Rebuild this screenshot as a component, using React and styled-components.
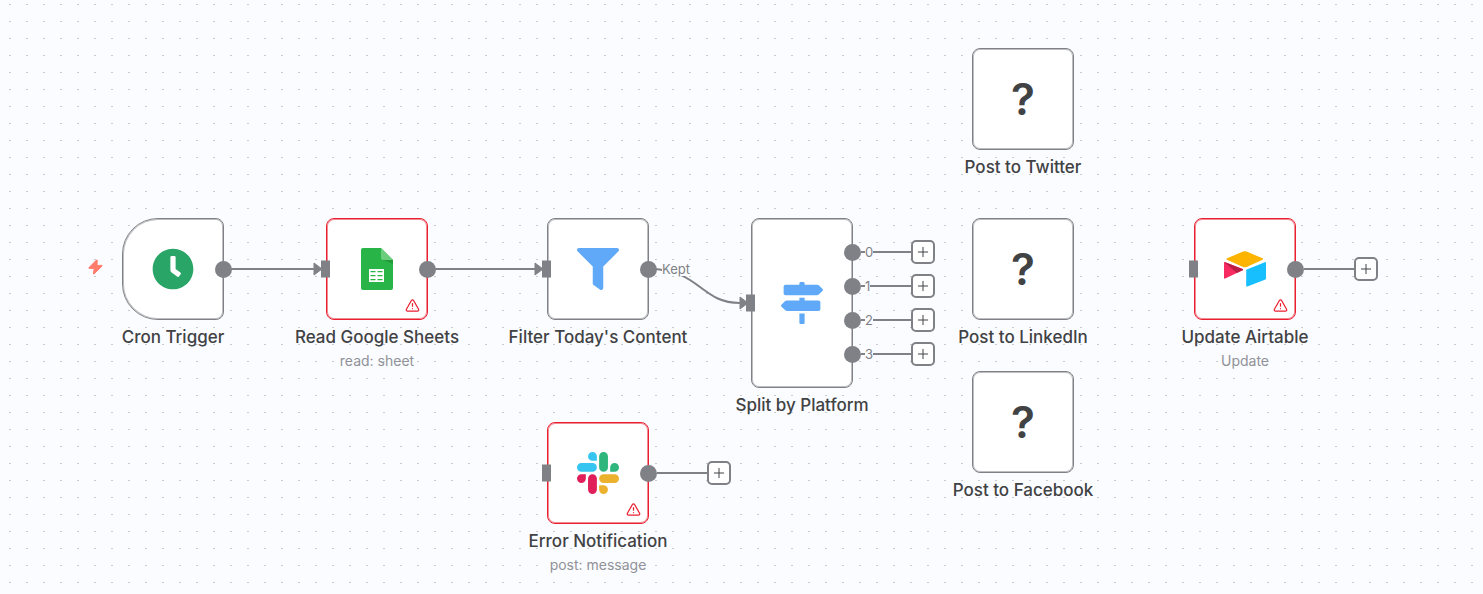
import React from "react";
import styled, { createGlobalStyle } from "styled-components";
import { FaClock, FaFilter, FaMapSigns } from "react-icons/fa";
import { Plus, TriangleAlert } from "lucide-react";

const GRAY = "#7f8186";
const RED = "#ea1f30";
const CANVAS = "#fbfcff";

const GlobalStyle = createGlobalStyle`
  body {
    margin: 0;
    font-family: Inter, "Liberation Sans", sans-serif;
    color: #414244;
    background: ${CANVAS};
  }
`;

const Canvas = styled.main`
  position: relative;
  width: 100%;
  min-height: 100vh;
  overflow: hidden;
  background-color: ${CANVAS};
  background-image: conic-gradient(from 270deg at 2px 1px, transparent 0, #c9cacd 0, #c9cacd 90deg, transparent 0);
  background-size: 17px 17px;
  background-position: 9px 4px;
`;

const Edges = styled.svg`
  position: absolute;
  top: 0;
  left: 0;
  overflow: visible;
  fill: none;
  stroke: ${GRAY};
  stroke-width: 2;
`;

const NodeItem = styled.article`
  position: absolute;
  left: ${(p) => p.$x}px;
  top: ${(p) => p.$y}px;
  width: 102px;
  display: flex;
  flex-direction: column;
  align-items: center;
`;

const Card = styled.div`
  position: relative;
  box-sizing: border-box;
  width: 100%;
  height: ${(p) => (p.$tall ? 170 : 102)}px;
  display: flex;
  align-items: center;
  justify-content: center;
  background: #fff;
  border: 1px solid ${(p) => (p.$error ? RED : GRAY)};
  box-shadow: inset 0 0 0 1px ${(p) => (p.$error ? "#f28a94" : "#bdbec1")};
  border-radius: ${(p) => (p.$trigger ? "36px 8px 8px 36px" : "8px")};

  > svg {
    display: block;
  }
`;

const Title = styled.h2`
  margin: 6px 0 0;
  font-size: 17px;
  line-height: 22px;
  font-weight: 500;
  white-space: nowrap;
`;

const Subtitle = styled.p`
  margin: 4px 0 0;
  font-size: 14px;
  line-height: 18px;
  color: #909298;
  white-space: nowrap;
`;

const Unknown = styled.span`
  font-size: 44px;
  line-height: 44px;
  font-weight: 600;
`;

const Warning = styled(TriangleAlert)`
  position: absolute;
  right: 7px;
  bottom: 6px;
  color: ${RED};
`;

const Bolt = styled.svg`
  position: absolute;
  left: -35px;
  top: 40px;
`;

const InputHandle = styled.span`
  position: absolute;
  left: -6px;
  top: 50%;
  width: 9px;
  height: 17px;
  transform: translateY(-50%);
  background: ${GRAY};
`;

const Outputs = styled.div`
  position: absolute;
  left: 92px;
  top: 50%;
  transform: translateY(-50%);
  display: flex;
  flex-direction: column;
  gap: 10px;
`;

const Output = styled.div`
  display: flex;
  align-items: center;
  height: 24px;
`;

const Dot = styled.span`
  width: 17px;
  height: 17px;
  border-radius: 50%;
  background: ${GRAY};
`;

const Stem = styled.span`
  display: flex;
  align-items: center;
  width: 50px;
  height: 2px;
  padding-left: 4px;
  box-sizing: border-box;
  background: ${GRAY};
`;

const EdgeLabel = styled.span`
  font-size: 13px;
  line-height: 14px;
  color: ${GRAY};
  background: ${CANVAS};
`;

const KeptLabel = styled(EdgeLabel)`
  position: absolute;
  left: 662px;
  top: 262px;
`;

const AddButton = styled.button`
  box-sizing: border-box;
  width: 24px;
  height: 24px;
  padding: 0;
  display: flex;
  align-items: center;
  justify-content: center;
  color: #414244;
  background: #fff;
  border: 2px solid ${GRAY};
  border-radius: 5px;
  cursor: pointer;
`;

function SheetsIcon() {
  return (
    <svg width="32" height="42" viewBox="0 0 32 42" aria-hidden="true">
      <path fill="#28b446" d="M2 0h18l12 12v28a2 2 0 0 1-2 2H2a2 2 0 0 1-2-2V2a2 2 0 0 1 2-2z" />
      <path fill="#219b38" d="M21 11.500 32 16v-4z" />
      <path fill="#6ace7c" d="M20 0l12 12H22a2 2 0 0 1-2-2z" />
      <path
        fill="#fff"
        fillRule="evenodd"
        d="M8 21h15v13H8zM9.500 23v1.200h5V23zm7 0v1.200h5V23zM9.500 27v1.200h5V27zm7 0v1.200h5V27zM9.500 31v1.200h5V31zm7 0v1.200h5V31z"
      />
    </svg>
  );
}

function SlackIcon() {
  return (
    <svg width="42" height="42" viewBox="0 0 24 24" aria-hidden="true">
      <path fill="#e01e5a" d="M5.042 15.165a2.528 2.528 0 0 1-2.520 2.523A2.528 2.528 0 0 1 0 15.165a2.527 2.527 0 0 1 2.522-2.520h2.520v2.520zM6.313 15.165a2.527 2.527 0 0 1 2.521-2.520 2.527 2.527 0 0 1 2.521 2.520v6.313A2.528 2.528 0 0 1 8.834 24a2.528 2.528 0 0 1-2.521-2.522v-6.313z" />
      <path fill="#36c5f0" d="M8.834 5.042a2.528 2.528 0 0 1-2.521-2.520A2.528 2.528 0 0 1 8.834 0a2.528 2.528 0 0 1 2.521 2.522v2.520H8.834zM8.834 6.313a2.528 2.528 0 0 1 2.521 2.521 2.528 2.528 0 0 1-2.521 2.521H2.522A2.528 2.528 0 0 1 0 8.834a2.528 2.528 0 0 1 2.522-2.521h6.312z" />
      <path fill="#2eb67d" d="M18.956 8.834a2.528 2.528 0 0 1 2.522-2.521A2.528 2.528 0 0 1 24 8.834a2.528 2.528 0 0 1-2.522 2.521h-2.522V8.834zM17.688 8.834a2.528 2.528 0 0 1-2.523 2.521 2.527 2.527 0 0 1-2.520-2.521V2.522A2.527 2.527 0 0 1 15.165 0a2.528 2.528 0 0 1 2.523 2.522v6.312z" />
      <path fill="#ecb22e" d="M15.165 18.956a2.528 2.528 0 0 1 2.523 2.522A2.528 2.528 0 0 1 15.165 24a2.527 2.527 0 0 1-2.520-2.522v-2.522h2.520zM15.165 17.688a2.527 2.527 0 0 1-2.520-2.523 2.526 2.526 0 0 1 2.520-2.520h6.313A2.527 2.527 0 0 1 24 15.165a2.528 2.528 0 0 1-2.522 2.523h-6.313z" />
    </svg>
  );
}

function AirtableIcon() {
  return (
    <svg width="42" height="36" viewBox="0 0 42 36" aria-hidden="true">
      <path fill="#fcb400" d="M19 .6a5 5 0 0 1 3.600 0L38.600 7.300a.8.8 0 0 1 0 1.500L22.700 15.900a5 5 0 0 1-3.600 0L3 8.800a.8.8 0 0 1 0-1.500z" />
      <path fill="#18bfff" d="M22.200 19.300a1 1 0 0 1 .6-.9l18-7.200a.9.9 0 0 1 1.200.8v15.500a1 1 0 0 1-.6.9l-18 7.100a.9.9 0 0 1-1.200-.8z" />
      <path fill="#f82b60" d="M0 12a.9.9 0 0 1 1.200-.8l17.400 6.900a.6.6 0 0 1 0 1.100L1.200 27.600A.8.8 0 0 1 0 26.900z" />
      <path fill="#ba1e45" d="M.4 11.200a.9.9 0 0 1 .8 0l17.400 6.900a.6.6 0 0 1 0 1.100L12.700 22z" />
    </svg>
  );
}

const ICONS = {
  clock: <FaClock size={42} color="#29a568" />,
  sheets: <SheetsIcon />,
  filter: <FaFilter size={42} color="#5fa9f8" />,
  signs: <FaMapSigns size={42} color="#5fa9f8" />,
  slack: <SlackIcon />,
  airtable: <AirtableIcon />,
  unknown: <Unknown>?</Unknown>,
};

const NODES = [
  { title: "Cron Trigger", icon: "clock", x: 122, y: 218, trigger: true, outputs: [{}] },
  { title: "Read Google Sheets", subtitle: "read: sheet", icon: "sheets", x: 326, y: 218, error: true, input: true, outputs: [{}] },
  { title: "Filter Today's Content", icon: "filter", x: 547, y: 218, input: true, outputs: [{}] },
  {
    title: "Split by Platform",
    icon: "signs",
    x: 751,
    y: 218,
    tall: true,
    input: true,
    outputs: [
      { label: "0", open: true },
      { label: "1", open: true },
      { label: "2", open: true },
      { label: "3", open: true },
    ],
  },
  { title: "Error Notification", subtitle: "post: message", icon: "slack", x: 547, y: 422, error: true, input: true, outputs: [{ open: true }] },
  { title: "Post to Twitter", icon: "unknown", x: 972, y: 48 },
  { title: "Post to LinkedIn", icon: "unknown", x: 972, y: 218 },
  { title: "Post to Facebook", icon: "unknown", x: 972, y: 371 },
  { title: "Update Airtable", subtitle: "Update", icon: "airtable", x: 1194, y: 218, error: true, input: true, outputs: [{ open: true }] },
];

function WorkflowNode({ node }) {
  const { title, subtitle, icon, x, y, trigger, tall, error, input, outputs = [] } = node;
  return (
    <NodeItem $x={x} $y={y}>
      <Card $trigger={trigger} $tall={tall} $error={error}>
        {ICONS[icon]}
        {error && <Warning size={15} aria-label="Node has issues" />}
        {trigger && (
          <Bolt width="15" height="16" viewBox="0 0 15 16" aria-hidden="true">
            <path
              fill="#ff7c6b"
              stroke="#ff7c6b"
              strokeLinejoin="round"
              d="M8.500 1 1 8.600v.8h5.200L5.400 15h.6l8-7.900v-.7H9L9.200 1z"
            />
          </Bolt>
        )}
        {input && <InputHandle />}
        {outputs.length > 0 && (
          <Outputs>
            {outputs.map(({ label, open }, i) => (
              <Output key={i}>
                <Dot />
                {open && (
                  <>
                    <Stem>{label && <EdgeLabel>{label}</EdgeLabel>}</Stem>
                    <AddButton type="button" aria-label={`Add node after ${title}`}>
                      <Plus size={16} strokeWidth={1.5} />
                    </AddButton>
                  </>
                )}
              </Output>
            ))}
          </Outputs>
        )}
      </Card>
      <Title>{title}</Title>
      {subtitle && <Subtitle>{subtitle}</Subtitle>}
    </NodeItem>
  );
}

function Connections() {
  return (
    <Edges width="1" height="1" aria-hidden="true">
      <defs>
        <marker id="arrow" viewBox="0 0 10 14" refX="1" refY="7" markerWidth="10" markerHeight="14" markerUnits="userSpaceOnUse">
          <path d="M1 1 9 7 1 13z" fill={GRAY} stroke={GRAY} strokeWidth="1" strokeLinejoin="round" />
        </marker>
      </defs>
      <path d="M224 269H314" markerEnd="url(#arrow)" />
      <path d="M428 269H535" markerEnd="url(#arrow)" />
      <path d="M649 269C700 269 700 303 740 303" markerEnd="url(#arrow)" />
    </Edges>
  );
}

export default function App() {
  return (
    <>
      <GlobalStyle />
      <Canvas>
        <Connections />
        <KeptLabel>Kept</KeptLabel>
        {NODES.map((node) => (
          <WorkflowNode key={node.title} node={node} />
        ))}
      </Canvas>
    </>
  );
}
